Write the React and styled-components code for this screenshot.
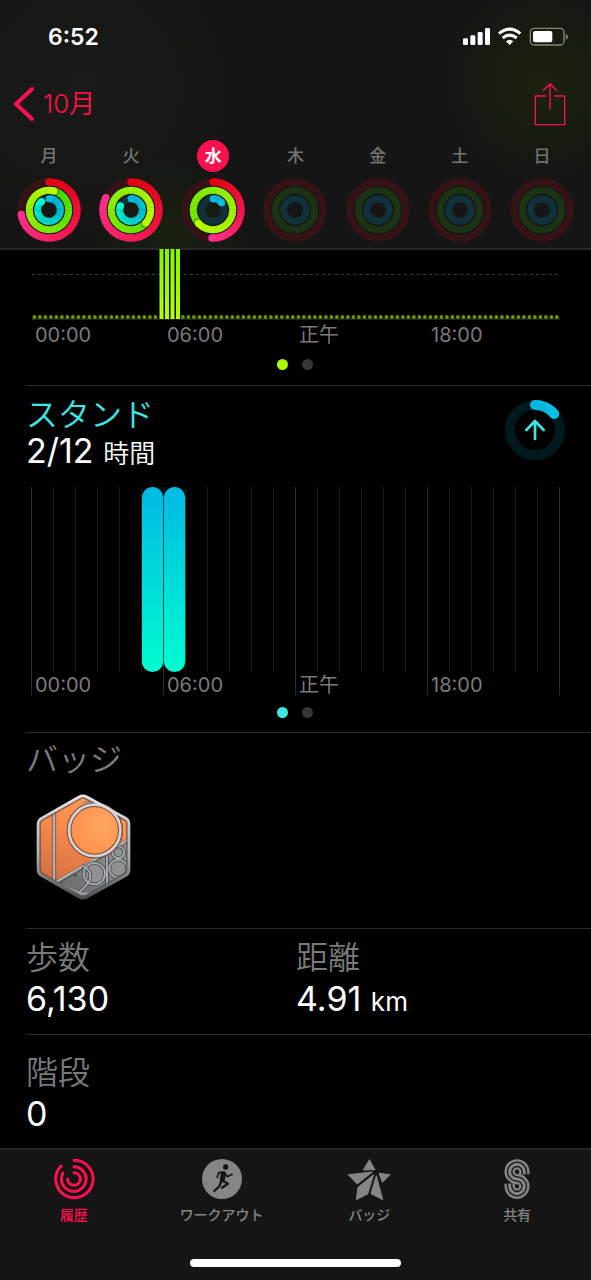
import React from "react";
import styled, { createGlobalStyle } from "styled-components";

const week = [
  { label: "月", move: 261, exercise: 375, stand: 319 },
  { label: "火", move: 296, exercise: 491, stand: 292 },
  { label: "水", move: 182, exercise: 588, stand: 50, selected: true },
  { label: "木" },
  { label: "金" },
  { label: "土" },
  { label: "日" },
];

const hours = ["00:00", "06:00", "正午", "18:00"];

const palette = {
  move: { track: "#351216", from: [227, 0, 15], to: [255, 48, 140] },
  exercise: { track: "#1b3312", from: [62, 222, 0], to: [190, 255, 0] },
  stand: { track: "#10303a", from: [0, 184, 226], to: [0, 255, 208] },
};

const mix = (a, b, t) =>
  `rgb(${a.map((v, i) => Math.round(v + (b[i] - v) * t)).join(",")})`;

const point = (c, r, deg) => {
  const rad = ((deg - 90) * Math.PI) / 180;
  return [c + r * Math.cos(rad), c + r * Math.sin(rad)];
};

// one ring, painted in short segments so the colour follows the arc
const Ring = ({ c, r, width, angle, kind, track }) => {
  const { from, to } = palette[kind];
  const base = track || palette[kind].track;
  if (!angle) {
    return <circle cx={c} cy={c} r={r} fill="none" stroke={base} strokeWidth={width} />;
  }
  const start = Math.max(0, angle - 360);
  const step = 4;
  const parts = [];
  for (let a = start; a < angle; a += step) {
    const [x1, y1] = point(c, r, a);
    const [x2, y2] = point(c, r, Math.min(a + step + 1, angle));
    const full = kind === "stand" && angle < 90 ? 360 : angle;
    parts.push(
      <path
        key={a}
        d={`M${x1} ${y1}A${r} ${r} 0 0 1 ${x2} ${y2}`}
        stroke={mix(from, to, a / full)}
        strokeWidth={width}
        fill="none"
      />
    );
  }
  const [sx, sy] = point(c, r, 0);
  const [ex, ey] = point(c, r, angle);
  const [hx, hy] = point(c, r, angle + 5);
  return (
    <g>
      <circle cx={c} cy={c} r={r} fill="none" stroke={base} strokeWidth={width} />
      {angle < 360 && <circle cx={sx} cy={sy} r={width / 2} fill={mix(from, to, 0)} />}
      {parts}
      {angle > 360 && <circle cx={hx} cy={hy} r={width / 2} fill="#000" opacity="0.25" />}
      <circle cx={ex} cy={ey} r={width / 2} fill={mix(from, to, angle < 90 ? angle / 360 : 1)} />
    </g>
  );
};

const DayRings = ({ move, exercise, stand }) => (
  <RingSvg viewBox="0 0 192 192" aria-hidden="true">
    <Ring c={96} r={84} width={22} angle={move} kind="move" />
    <Ring c={96} r={59} width={21} angle={exercise} kind="exercise" />
    <Ring c={96} r={34} width={21} angle={stand} kind="stand" />
  </RingSvg>
);

const StatusIcons = () => (
  <svg width="106" height="20" viewBox="0 0 318 60" aria-hidden="true">
    <g fill="#fff">
      <rect x="0" y="34" width="15" height="20" rx="4" />
      <rect x="22" y="25" width="15" height="29" rx="4" />
      <rect x="44" y="15" width="15" height="39" rx="4" />
      <rect x="66" y="3" width="15" height="51" rx="4" />
      <path d="M140 54L129 43Q140 34 151 43Z" />
    </g>
    <g fill="none" stroke="#fff" strokeWidth="9">
      <path d="M108 20Q140 -7 172 20" />
      <path d="M119 33Q140 16 161 33" />
    </g>
    <rect x="202" y="4" width="101" height="50" rx="12" fill="none" stroke="#85867f" strokeWidth="4" />
    <rect x="210" y="12" width="58" height="34" rx="6" fill="#fff" />
    <path d="M308 20Q315 23 315 29Q315 35 308 38Z" fill="#85867f" />
  </svg>
);

const ChevronIcon = () => (
  <svg width="22" height="36" viewBox="0 0 22 36" fill="none" stroke="#fc1150" strokeWidth="4" strokeLinecap="round" strokeLinejoin="round" aria-hidden="true">
    <path d="M19 3L3 18L19 33" />
  </svg>
);

const ShareIcon = () => (
  <svg width="32" height="44" viewBox="0 0 96 132" fill="none" stroke="#fc1150" strokeWidth="4" aria-hidden="true">
    <path d="M36 42H4V128H92V42H60" />
    <path d="M48 4V82M27 26L48 5L69 26" />
  </svg>
);

const ExerciseChart = () => (
  <ChartSvg viewBox="0 0 528 71" aria-hidden="true">
    <defs>
      <linearGradient id="exercise" x1="0" y1="0" x2="0" y2="1">
        <stop offset="0" stopColor="#84f500" />
        <stop offset="1" stopColor="#b4ff00" />
      </linearGradient>
    </defs>
    <path d="M0 24.5H528" stroke="#3c3c3c" strokeDasharray="3.3 3" />
    <path d="M0 69H528" stroke="#3c4430" />
    {Array.from({ length: 96 }, (_, i) =>
      i > 22 && i < 27 ? (
        <rect key={i} x={i * 5.5 + 1} y="-1" width="4" height="70" fill="url(#exercise)" />
      ) : (
        <circle key={i} cx={i * 5.5 + 2.4} cy="67" r="1.9" fill="#6a9800" />
      )
    )}
  </ChartSvg>
);

const StandChart = () => (
  <ChartSvg viewBox="0 0 528 208" aria-hidden="true">
    <defs>
      <linearGradient id="stand" x1="0" y1="0" x2="0" y2="1">
        <stop offset="0" stopColor="#00b9e4" />
        <stop offset="1" stopColor="#00fcd0" />
      </linearGradient>
    </defs>
    {Array.from({ length: 25 }, (_, i) => (
      <path key={i} d={`M${i * 22 - 0.5} 0V${i % 6 ? 185 : 208}`} stroke={i % 6 ? "#1b1b1b" : "#2b2b2b"} />
    ))}
    <rect x="110" y="0" width="21.2" height="185" rx="10.6" fill="url(#stand)" />
    <rect x="132" y="0" width="21.2" height="185" rx="10.6" fill="url(#stand)" />
  </ChartSvg>
);

const hexPath =
  "M178 200Q190 193 202 200L319 264Q328 270 328 282V418Q328 429 319 435L202 500Q190 507 178 500L65 435Q55 429 55 418V282Q55 270 65 264Z";

const Badge = () => (
  <svg width="97" height="108" viewBox="46 188 291 324" role="img" aria-label="2018年10月のバッジ">
    <defs>
      <linearGradient id="rim" x1="0" y1="0" x2="0" y2="1">
        <stop offset="0" stopColor="#e2e5e8" />
        <stop offset="0.6" stopColor="#a9adb1" />
        <stop offset="1" stopColor="#4a4d50" />
      </linearGradient>
      <linearGradient id="face" x1="0.7" y1="0" x2="0.3" y2="1">
        <stop offset="0" stopColor="#ff9f57" />
        <stop offset="0.4" stopColor="#f98a4c" />
        <stop offset="1" stopColor="#c9693f" />
      </linearGradient>
      <radialGradient id="disc" cx="0.65" cy="0.4" r="0.7">
        <stop offset="0" stopColor="#ffa761" />
        <stop offset="1" stopColor="#fd8e4c" />
      </radialGradient>
      <linearGradient id="metal" x1="1" y1="0" x2="0" y2="1">
        <stop offset="0" stopColor="#9da1a4" />
        <stop offset="1" stopColor="#5c6063" />
      </linearGradient>
      <clipPath id="hex">
        <path d={hexPath} />
      </clipPath>
    </defs>
    <g clipPath="url(#hex)">
      <rect x="46" y="188" width="291" height="325" fill="url(#face)" />
      <path d="M104 460L337 324V520H104Z" fill="url(#metal)" />
      <g fill="none" stroke="#50383a" strokeOpacity="0.6" strokeWidth="13">
        <path d="M103 240V462M104 460L337 324" />
        <path d="M192 222Q270 206 298 268Q312 310 292 350" />
      </g>
      <g fill="none" stroke="#b0b4b8" strokeWidth="7">
        <path d="M103 236V462M104 458L337 322" />
        <path d="M192 222Q270 206 298 268Q312 310 292 350" stroke="#d0d3d6" />
      </g>
      <g fill="#8e9295" stroke="#484b4e" strokeWidth="11">
        <circle cx="296" cy="366" r="18" />
        <circle cx="296" cy="415" r="27" />
        <circle cx="224" cy="430" r="32" />
      </g>
      <g fill="none" stroke="#484b4e" strokeWidth="11">
        <path d="M262 365V466" />
        <path d="M188 406Q224 424 206 458L178 488" />
      </g>
      <g fill="none" stroke="#a4a8ab" strokeWidth="6">
        <circle cx="296" cy="366" r="18" />
        <circle cx="296" cy="415" r="27" />
        <circle cx="224" cy="430" r="32" />
        <path d="M262 365V466" />
        <path d="M188 406Q224 424 206 458L178 488" />
        <path d="M104 454L182 490H224L331 430" />
      </g>
      <path d="M160 432Q166 440 172 433" fill="none" stroke="#484b4e" strokeWidth="5" />
    </g>
    <path d={hexPath} fill="none" stroke="#4b4240" strokeOpacity="0.6" strokeWidth="18" clipPath="url(#hex)" />
    <circle cx="225" cy="300" r="77" fill="url(#disc)" stroke="#784838" strokeWidth="14" />
    <circle cx="225" cy="300" r="77" fill="none" stroke="#d3d6d8" strokeWidth="8" />
    <path d={hexPath} fill="none" stroke="url(#rim)" strokeWidth="8" />
  </svg>
);

const HistoryIcon = () => (
  <TabSvg viewBox="0 0 132 132" fill="none" stroke="currentColor" strokeWidth="9" strokeLinecap="round" aria-hidden="true">
    <path d="M66 10A56 56 0 1 1 27 27" />
    <path d="M66 29A37 37 0 1 1 33 48" />
    <path d="M66 47A19 19 0 1 1 47 66" />
  </TabSvg>
);

const WorkoutIcon = () => (
  <TabSvg viewBox="0 0 132 132" aria-hidden="true">
    <circle cx="66" cy="66" r="60" fill="currentColor" />
    <circle cx="77" cy="30" r="8" fill="#151515" />
    <g fill="none" stroke="#151515" strokeLinecap="round" strokeLinejoin="round">
      <path d="M70 50L67 68" strokeWidth="15" />
      <path d="M70 46L56 47L52 61" strokeWidth="5" />
      <path d="M74 47L82 59L96 52" strokeWidth="5" />
      <path d="M68 71L84 80L66 92" strokeWidth="7" />
      <path d="M64 72L58 88L43 102" strokeWidth="7" />
    </g>
  </TabSvg>
);

const BadgeIcon = () => (
  <TabSvg viewBox="0 0 132 132" fill="currentColor" stroke="currentColor" strokeWidth="3" strokeLinejoin="round" aria-hidden="true">
    <path d="M67 8L84 38L49 39Z" />
    <path d="M4 53L76 45L31 81Z" />
    <path d="M96 49L129 53L106 76Z" />
    <path d="M80 53L33 91L28 128L62 111Z" />
    <path d="M88 56L107 128L72 110Z" />
  </TabSvg>
);

const sPath = "M88 52V44A22 22 0 1 0 66 66A22 22 0 1 1 44 88V80";

const SharingIcon = () => (
  <TabSvg viewBox="0 0 132 132" fill="none" aria-hidden="true">
    <path d={sPath} stroke="currentColor" strokeWidth="31" />
    <path d={sPath} stroke="#151515" strokeWidth="17" />
    <path d={sPath} stroke="currentColor" strokeWidth="9" />
  </TabSvg>
);

const tabs = [
  { label: "履歴", Icon: HistoryIcon, active: true },
  { label: "ワークアウト", Icon: WorkoutIcon },
  { label: "バッジ", Icon: BadgeIcon },
  { label: "共有", Icon: SharingIcon },
];

const HourLabels = () => (
  <Hours>
    {hours.map((hour) => (
      <Hour key={hour}>{hour}</Hour>
    ))}
  </Hours>
);

const App = () => {
  return (
    <>
      <GlobalStyle />
      <Screen>
        <Header>
          <StatusBar>
            <Time>6:52</Time>
            <StatusIcons />
          </StatusBar>
          <NavBar>
            <BackButton type="button">
              <ChevronIcon />
              10月
            </BackButton>
            <ShareButton type="button" aria-label="共有">
              <ShareIcon />
            </ShareButton>
          </NavBar>
          <Week>
            {week.map((day) => (
              <Day key={day.label} type="button" aria-pressed={!!day.selected}>
                <DayName $selected={day.selected}>{day.label}</DayName>
                <DayRings {...day} />
              </Day>
            ))}
          </Week>
        </Header>

        <Main>
          <ExerciseSection>
            <Chart>
              <ExerciseChart />
              <HourLabels />
            </Chart>
            <Pager>
              <Dot $color="#a6ff00" />
              <Dot />
            </Pager>
          </ExerciseSection>

          <StandSection>
            <StandHead>
              <div>
                <Title $color="#3ce8e4">スタンド</Title>
                <Value $tight>
                  2/12 <Unit>時間</Unit>
                </Value>
              </div>
              <StandRing viewBox="0 0 180 180" aria-hidden="true">
                <Ring c={90} r={75} width={30} angle={50} kind="stand" track="#00191f" />
                <path d="M90 117V64M64 90L90 63L116 90" fill="none" stroke="#3ce8e4" strokeWidth="8" strokeLinecap="round" strokeLinejoin="round" />
              </StandRing>
            </StandHead>
            <StandBody>
              <StandChart />
              <HourLabels />
            </StandBody>
            <Pager $tight>
              <Dot $color="#3ce8e4" />
              <Dot />
            </Pager>
          </StandSection>

          <BadgeSection>
            <Title>バッジ</Title>
            <BadgeButton type="button">
              <Badge />
            </BadgeButton>
          </BadgeSection>

          <StatsSection>
            <div>
              <Title>歩数</Title>
              <Value>6,130</Value>
            </div>
            <div>
              <Title>距離</Title>
              <Value>
                4.91 <Unit $latin>km</Unit>
              </Value>
            </div>
          </StatsSection>

          <FloorsSection>
            <Title>階段</Title>
            <Value>0</Value>
          </FloorsSection>
        </Main>

        <TabBar>
          <Tabs>
            {tabs.map(({ label, Icon, active }) => (
              <Tab key={label} href="#" $active={active} aria-current={active ? "page" : undefined}>
                <Icon />
                {label}
              </Tab>
            ))}
          </Tabs>
          <HomeIndicator />
        </TabBar>
      </Screen>
    </>
  );
};

export default App;

const GlobalStyle = createGlobalStyle`
  * {
    box-sizing: border-box;
  }
  body {
    margin: 0;
    background: #000;
    color: #fff;
    font-family: Inter, "Noto Sans CJK JP", sans-serif;
  }
  button {
    border: 0;
    padding: 0;
    background: none;
    color: inherit;
    font: inherit;
    cursor: pointer;
  }
  svg {
    display: block;
    flex: none;
  }
`;
const Screen = styled.div`
  display: flex;
  flex-direction: column;
  min-height: 100vh;
`;
const Header = styled.header`
  border-bottom: 2px solid #262626;
  background:
    radial-gradient(circle at 92% 33%, #1c220c 0, transparent 100px),
    radial-gradient(circle at 29% 94%, #18200e 0, transparent 80px),
    radial-gradient(circle at 14% 36%, #1a1b17 0, transparent 150px),
    #151515;
`;
const StatusBar = styled.div`
  display: flex;
  align-items: center;
  justify-content: space-between;
  height: 74px;
  padding: 0 22px 0 48px;
`;
const Time = styled.span`
  font-size: 23px;
  font-weight: 600;
`;
const NavBar = styled.div`
  display: flex;
  align-items: center;
  justify-content: space-between;
  height: 60px;
  padding: 0 25px 0 13px;
`;
const BackButton = styled.button`
  display: flex;
  align-items: center;
  gap: 8px;
  color: #fc1150;
  font-size: 26px;
  font-weight: 350;
  line-height: 36px;
`;
const ShareButton = styled.button`
  line-height: 0;
`;
const Week = styled.div`
  display: grid;
  grid-template-columns: repeat(7, 1fr);
  padding: 6px 8px;
`;
const Day = styled.button`
  display: flex;
  flex-direction: column;
  align-items: center;
  gap: 6px;
`;
const DayName = styled.span`
  display: grid;
  place-items: center;
  width: 32px;
  height: 32px;
  border-radius: 50%;
  background: ${(props) => (props.$selected ? "#fc1150" : "transparent")};
  color: ${(props) => (props.$selected ? "#fff" : "#757575")};
  font-size: 17px;
  font-weight: ${(props) => (props.$selected ? 700 : 500)};
  line-height: 24px;
`;
const RingSvg = styled.svg`
  width: 64px;
  height: 64px;
`;
const Main = styled.main`
  flex: 1;
`;
const Section = styled.section`
  margin-left: 26px;
  border-bottom: 1px solid #2a2a2a;
`;
const ExerciseSection = styled(Section)`
  height: 136px;
`;
const StandSection = styled(Section)`
  height: 347px;
  padding-top: 10px;
`;
const BadgeSection = styled(Section)`
  height: 196px;
  padding-top: 8px;
`;
const StatsSection = styled(Section)`
  display: grid;
  grid-template-columns: 270px 1fr;
  height: 106px;
  padding-top: 10px;
`;
const FloorsSection = styled(Section)`
  padding-top: 19px;
  border-bottom: 0;
`;
const Chart = styled.div`
  padding: 0 31px 0 6px;
`;
const ChartSvg = styled.svg`
  width: 100%;
  height: auto;
  overflow: visible;
`;
const Hours = styled.div`
  display: grid;
  grid-template-columns: repeat(4, 1fr);
  color: #7a7a7a;
  font-size: 20px;
  font-weight: 400;
  line-height: 28px;
`;
const Hour = styled.span`
  padding-left: 3px;
`;
const StandHead = styled.div`
  display: flex;
  align-items: flex-start;
  justify-content: space-between;
  padding-right: 26px;
`;
const StandRing = styled.svg`
  width: 60px;
  height: 60px;
  margin-top: 4px;
`;
const StandBody = styled(Chart)`
  margin-top: 16px;

  ${Hours} {
    margin-top: -24px;
  }
`;
const Pager = styled.div`
  display: flex;
  justify-content: center;
  gap: 14px;
  margin: ${(props) => (props.$tight ? "8px" : "10px")} 27px 0 0;
`;
const Dot = styled.span`
  width: 11px;
  height: 11px;
  border-radius: 50%;
  background: ${(props) => props.$color || "#363636"};
`;
const Title = styled.h2`
  margin: 0;
  color: ${(props) => props.$color || "#7a7a7a"};
  font-size: 32px;
  font-weight: 350;
  line-height: 38px;
`;
const Value = styled.p`
  margin: 0;
  font-size: 34px;
  font-weight: 400;
  line-height: ${(props) => (props.$tight ? "34px" : "44px")};
`;
const Unit = styled.span`
  font-size: 26px;
  font-weight: ${(props) => (props.$latin ? 400 : 350)};
`;
const BadgeButton = styled.button`
  display: block;
  margin: 14px 0 0 9px;
`;
const TabBar = styled.footer`
  border-top: 2px solid #262626;
  background: #151515;
`;
const Tabs = styled.nav`
  display: grid;
  grid-template-columns: repeat(4, 1fr);
`;
const Tab = styled.a`
  display: flex;
  flex-direction: column;
  align-items: center;
  gap: 4px;
  padding-top: 7px;
  color: ${(props) => (props.$active ? "#fc1150" : "#858585")};
  font-size: 14px;
  font-weight: 500;
  line-height: 20px;
  text-decoration: none;
`;
const TabSvg = styled.svg`
  width: 44px;
  height: 44px;
`;
const HomeIndicator = styled.div`
  width: 211px;
  height: 8px;
  margin: 34px auto 13px;
  border-radius: 4px;
  background: #fff;
`;
